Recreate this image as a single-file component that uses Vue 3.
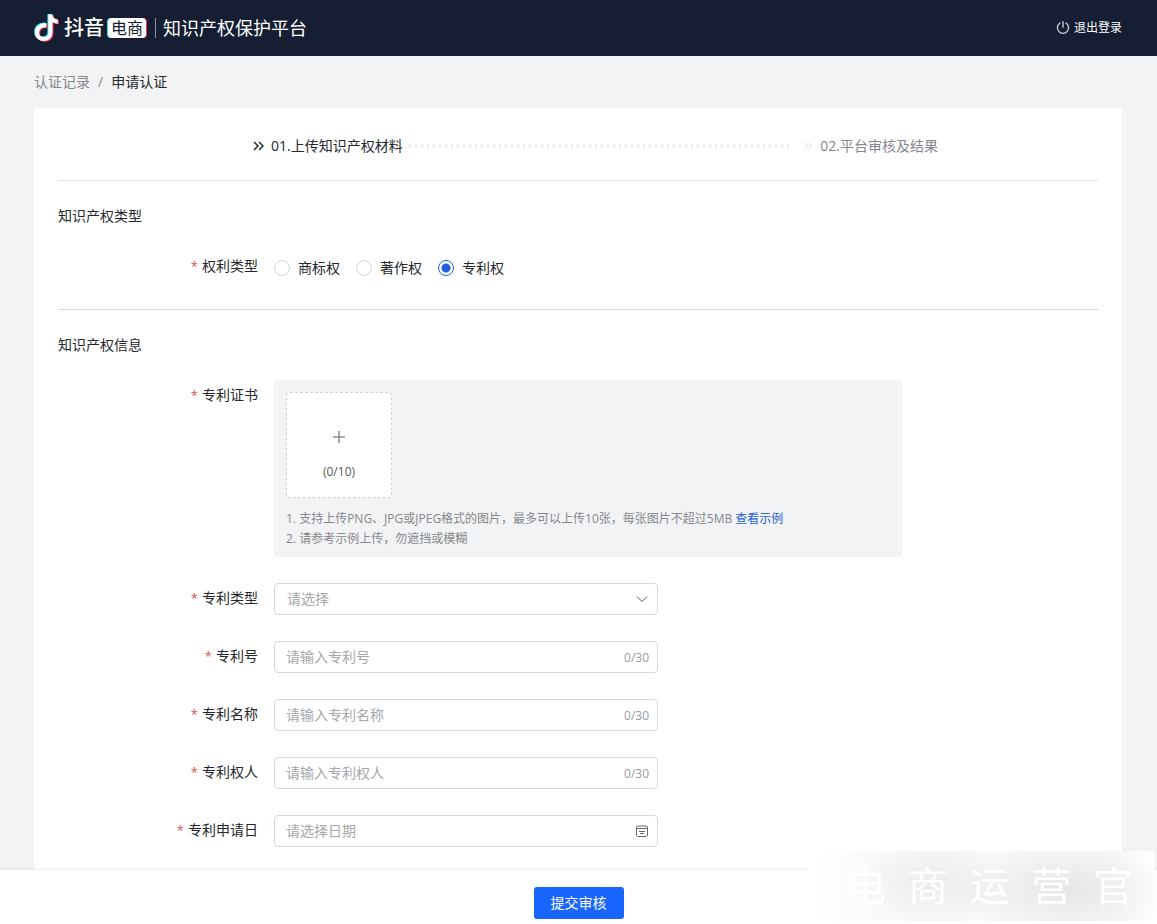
<script setup>
import { ref } from 'vue'

const rightTypes = ['商标权', '著作权', '专利权']
const rightType = ref('专利权')
const patentType = ref('')
const applyDate = ref('')
const textFields = ref([
  { id: 'patent-no', label: '专利号', hint: '请输入专利号', value: '' },
  { id: 'patent-name', label: '专利名称', hint: '请输入专利名称', value: '' },
  { id: 'patent-owner', label: '专利权人', hint: '请输入专利权人', value: '' },
])
const watermark = [...'电商运营官']

const notePath =
  'M12.4 12.4C6.6 11.6 3 15.200 3 19.400c0 4 3 6.600 6.600 6.600 4 0 6.800-2.600 6.800-6.600V1.600c.4 4 3.400 6.800 7.400 7'
</script>

<template>
  <div class="page">
    <header class="topbar">
      <div class="brand">
        <svg width="28" height="30" viewBox="0 0 28 30" fill="none" stroke-width="4.2">
          <path stroke="#25e6e4" :d="notePath" transform="translate(-.9 -.6)" />
          <path stroke="#fe2c55" :d="notePath" transform="translate(1 .7)" />
          <path stroke="#fff" :d="notePath" />
        </svg>
        <span class="brand-name">抖音</span>
        <span class="brand-tag">电商</span>
        <span class="brand-line"></span>
        <h1 class="brand-title">知识产权保护平台</h1>
      </div>
      <button class="logout" type="button">
        <svg width="14" height="14" viewBox="0 0 14 14" fill="none" stroke="#c9ccd3" stroke-width="1.4" stroke-linecap="round">
          <path d="M4 2a5.600 5.600 0 1 0 6 0M7 .8v5.400" />
        </svg>
        退出登录
      </button>
    </header>

    <main class="body">
      <nav class="crumbs">
        <a href="#">认证记录</a>
        <span class="slash">/</span>
        <span class="current">申请认证</span>
      </nav>

      <form class="card" @submit.prevent>
        <div class="steps">
          <div class="step active">
            <svg width="11" height="10" viewBox="0 0 11 10" fill="none" stroke="currentColor" stroke-width="1.5">
              <path d="M1 1l4 4-4 4M6 1l4 4-4 4" />
            </svg>
            <span>01.上传知识产权材料</span>
          </div>
          <div class="dots"></div>
          <div class="step">
            <svg class="faint" width="10" height="8" viewBox="0 0 11 10" fill="none" stroke="currentColor" stroke-width="1.2">
              <path d="M1 1l4 4-4 4M6 1l4 4-4 4" />
            </svg>
            <span>02.平台审核及结果</span>
          </div>
        </div>

        <section class="section">
          <h2>知识产权类型</h2>
          <div class="item">
            <span id="right-type" class="label">权利类型</span>
            <div class="radios" role="radiogroup" aria-labelledby="right-type">
              <label v-for="t in rightTypes" :key="t" class="radio">
                <input v-model="rightType" type="radio" name="right-type" :value="t" />
                <span>{{ t }}</span>
              </label>
            </div>
          </div>
        </section>

        <section class="section">
          <h2>知识产权信息</h2>
          <div class="item">
            <span class="label">专利证书</span>
            <div class="upload">
              <button class="drop" type="button">
                <svg width="14" height="14" viewBox="0 0 14 14" stroke="#8c8f94" stroke-width="1.5">
                  <path d="M7 1v12M1 7h12" />
                </svg>
                <span>(0/10)</span>
              </button>
              <ol class="tips">
                <li>1. 支持上传PNG、JPG或JPEG格式的图片，最多可以上传10张，每张图片不超过5MB <a href="#">查看示例</a></li>
                <li>2. 请参考示例上传，勿遮挡或模糊</li>
              </ol>
            </div>
          </div>

          <div class="item">
            <label class="label" for="patent-type">专利类型</label>
            <div class="field">
              <select id="patent-type" v-model="patentType">
                <option value="">请选择</option>
                <option value="1">发明专利</option>
              </select>
              <svg class="mark" width="12" height="12" viewBox="0 0 12 12" fill="none" stroke="#55585e">
                <path d="M1 3.5l5 5 5-5" />
              </svg>
            </div>
          </div>

          <div v-for="f in textFields" :key="f.id" class="item">
            <label class="label" :for="f.id">{{ f.label }}</label>
            <div class="field">
              <input :id="f.id" v-model="f.value" type="text" maxlength="30" :placeholder="f.hint" />
              <span class="count">{{ f.value.length }}/30</span>
            </div>
          </div>

          <div class="item">
            <label class="label" for="apply-date">专利申请日</label>
            <div class="field">
              <input id="apply-date" v-model="applyDate" type="text" placeholder="请选择日期" />
              <svg class="mark" width="12" height="12" viewBox="0 0 12 12" fill="none" stroke="#66696f">
                <rect x=".5" y="1" width="11" height="10.5" rx="1.2" />
                <path d="M.5 3.500h11M3 6.500h6M4 8.500h4" />
              </svg>
            </div>
          </div>
        </section>
      </form>
    </main>

    <footer class="actions">
      <button class="submit" type="button">提交审核</button>
    </footer>

    <div class="watermark">
      <span v-for="c in watermark" :key="c">{{ c }}</span>
    </div>
  </div>
</template>

<style>
body {
  margin: 0;
  background: #f2f3f5;
}
</style>

<style scoped>
.page {
  position: relative;
  display: flex;
  flex-direction: column;
  min-height: 100vh;
  overflow: hidden;
  font: 14px/22px "Open Sans", "Noto Sans CJK SC", sans-serif;
  color: #25272c;
  background: #f2f3f5;
}
.page * {
  box-sizing: border-box;
}
button,
input,
select {
  font: inherit;
  color: inherit;
}
a {
  text-decoration: none;
}
.topbar {
  display: flex;
  align-items: center;
  justify-content: space-between;
  height: 56px;
  padding: 0 35px 0 34px;
  color: #fff;
  background: #151e32;
}
.brand {
  display: flex;
  align-items: center;
}
.brand-name {
  margin: 0 4px 0 2px;
  font-size: 20px;
  font-weight: 500;
}
.brand-tag {
  padding: 0 3px;
  border-radius: 4px;
  font-size: 16px;
  line-height: 20px;
  color: #151e32;
  background: #fff;
  box-shadow: -1px 0 0 #25e6e4, 1px 0 0 #fe2c55;
}
.brand-line {
  width: 1px;
  height: 20px;
  margin: 0 7px 0 9px;
  background: #8a8f99;
}
.brand-title {
  margin: 0;
  font-size: 18px;
  font-weight: 400;
}
.logout {
  display: flex;
  align-items: center;
  gap: 4px;
  padding: 0;
  border: 0;
  font-size: 12px;
  background: none;
}
.body {
  display: flex;
  flex: 1;
  flex-direction: column;
  padding: 15px 35px 0 34px;
}
.crumbs {
  display: flex;
  gap: 8px;
  margin-bottom: 15px;
}
.crumbs a,
.slash {
  color: #85878c;
}
.card {
  flex: 1;
  padding: 0 24px;
  border-radius: 4px 4px 0 0;
  background: #fff;
}
.steps {
  display: flex;
  align-items: center;
  height: 73px;
  padding: 4px 160px 0 195px;
  border-bottom: 1px solid #e8e9eb;
}
.step {
  display: flex;
  align-items: center;
  gap: 7px;
  color: #85878c;
}
.active {
  color: #25272c;
}
.faint {
  color: #d5d6d9;
}
.dots {
  flex: 1;
  height: 4px;
  margin: 0 14px 0 2px;
  background: repeating-linear-gradient(90deg, transparent 0 4px, #ebecee 4px 6px);
}
.section {
  padding-top: 24px;
}
.section + .section {
  border-top: 1px solid #d9dadd;
}
h2 {
  margin: 0 0 24px;
  font-size: 14px;
  font-weight: 400;
}
.item {
  display: grid;
  grid-template-columns: 200px minmax(0, 1fr);
  column-gap: 16px;
  margin-bottom: 26px;
}
.section:last-child .item:last-child {
  margin-bottom: 23px;
}
.label {
  line-height: 30px;
  text-align: right;
}
.label::before {
  content: "*";
  margin-right: 4px;
  font-size: 13px;
  color: #d9534f;
}
.radios {
  display: flex;
  gap: 16px;
  padding-top: 2px;
  height: 32px;
}
.radio {
  display: flex;
  align-items: center;
  gap: 8px;
}
.radio input {
  appearance: none;
  width: 16px;
  height: 16px;
  margin: 0;
  border: 1px solid #d5d7da;
  border-radius: 50%;
}
.radio input:checked {
  border-color: #1f66dd;
  background: radial-gradient(#1f5fe0 0 4px, #fff 5px);
}
.upload {
  max-width: 628px;
  padding: 12px 12px 8px;
  border-radius: 4px;
  background: #f2f3f5;
}
.drop {
  display: flex;
  flex-direction: column;
  align-items: center;
  gap: 17px;
  width: 106px;
  height: 106px;
  padding: 37px 0 0;
  border: 1px dashed #cfd1d5;
  border-radius: 4px;
  font-size: 12px;
  color: #55585e;
  background: #fff;
}
.tips {
  margin: 11px 0 0;
  padding: 0;
  list-style: none;
  font-size: 12px;
  line-height: 20px;
  color: #85878c;
}
.tips a {
  color: #1f62d0;
}
.field {
  display: flex;
  align-items: center;
  max-width: 384px;
  height: 32px;
  border: 1px solid #d9dadd;
  border-radius: 4px;
}
.field input,
.field select {
  flex: 1;
  min-width: 0;
  height: 30px;
  padding: 0 12px;
  border: 0;
  outline: 0;
  background: none;
}
.field input {
  padding: 0 11px 2px;
}
.field select {
  appearance: none;
  color: #a5a7ab;
}
.field input::placeholder {
  color: #a5a7ab;
}
.count {
  padding: 2px 8px 0 0;
  font-size: 12px;
  color: #999ba0;
}
.mark {
  margin-right: 9px;
}
.actions {
  z-index: 1;
  display: flex;
  justify-content: center;
  padding: 17px 0 5px;
  background: #fff;
  box-shadow: 0 -1px 3px rgba(0, 0, 0, 0.08);
}
.submit {
  height: 32px;
  padding: 0 17px;
  border: 0;
  border-radius: 3px;
  color: #fff;
  background: #1966ff;
}
.watermark {
  position: absolute;
  right: 2px;
  bottom: 3px;
  z-index: 2;
  display: flex;
  justify-content: space-between;
  width: 347px;
  padding: 0 22px 0 38px;
  font-size: 40px;
  line-height: 70px;
  color: #fff;
  background:
    radial-gradient(ellipse 80px 46px at 36% 45%, rgba(0, 0, 0, 0.06), transparent),
    radial-gradient(ellipse 110px 50px at 74% 55%, rgba(0, 0, 0, 0.08), transparent),
    linear-gradient(90deg, #fff, #fafafa 20%, #f9f9f9 90%, #fff);
  pointer-events: none;
}
</style>
